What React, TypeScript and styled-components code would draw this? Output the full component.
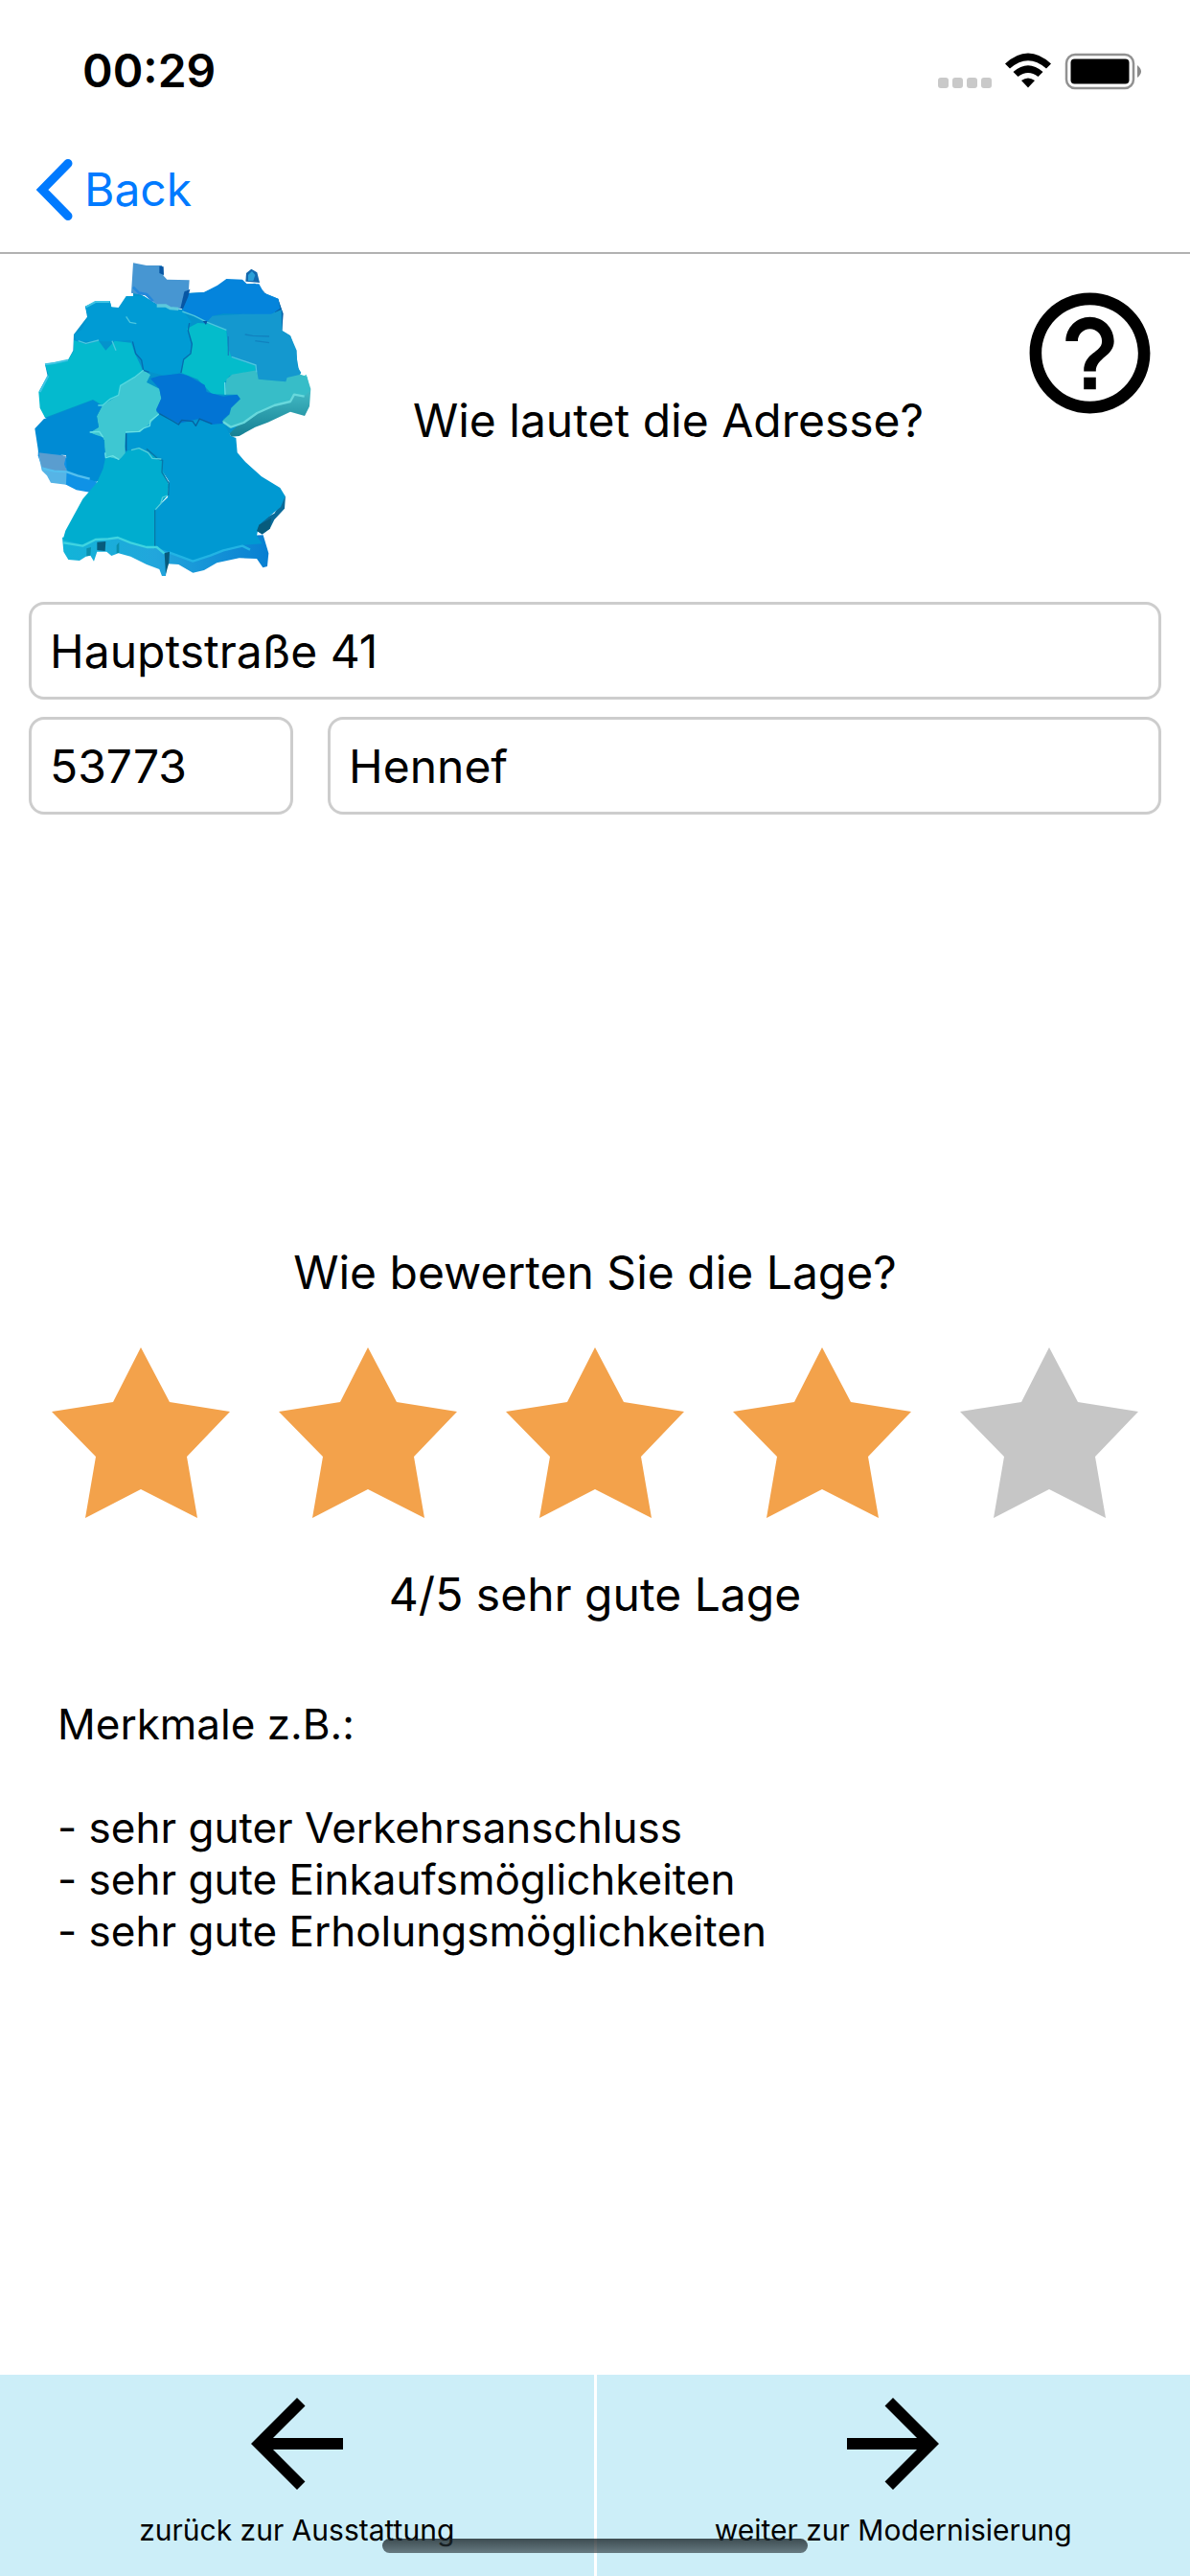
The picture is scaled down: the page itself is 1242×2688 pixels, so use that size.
import React, { useState } from 'react';
import styled, { createGlobalStyle } from 'styled-components';

const GlobalStyle = createGlobalStyle`
  *, *::before, *::after { box-sizing: border-box; }
  body {
    margin: 0;
    background: #fff;
    color: #000;
    font-family: Inter, "Liberation Sans", sans-serif;
  }
  button, input { font: inherit; color: inherit; }
`;

const Page = styled.div`
  display: flex;
  flex-direction: column;
  min-height: 100vh;
`;

const StatusBar = styled.header`
  display: flex;
  align-items: center;
  justify-content: space-between;
  height: 132px;
  padding: 16px 50px 0 86px;
`;

const Clock = styled.time`
  font-size: 48px;
  font-weight: 600;
  line-height: 60px;
`;

const NavBar = styled.nav`
  display: flex;
  align-items: center;
  height: 133px;
  padding: 0 36px;
  border-bottom: 2px solid #b2b2b2;
`;

const BackLink = styled.a`
  display: flex;
  align-items: center;
  gap: 10px;
  color: #007aff;
  font-size: 48px;
  line-height: 60px;
  text-decoration: none;
`;

const Content = styled.main`
  display: flex;
  flex-direction: column;
  flex: 1;
`;

const Intro = styled.section`
  display: flex;
  align-items: center;
  padding: 4px 29px 0 33px;
`;

const Question = styled.h1`
  flex: 1;
  margin: 0;
  font-size: 48px;
  font-weight: 400;
  line-height: 60px;
  text-align: center;
`;

const HelpButton = styled.button`
  align-self: flex-start;
  display: flex;
  margin-top: 24px;
  padding: 0;
  border: 0;
  background: none;
`;

const AddressForm = styled.form`
  display: grid;
  grid-template-columns: 276px 1fr;
  gap: 18px 36px;
  padding: 19px 30px 0;
`;

const Field = styled.input<{ $wide?: boolean }>`
  grid-column: ${(p) => (p.$wide ? '1 / -1' : 'auto')};
  width: 100%;
  height: 102px;
  padding: 0 19px;
  border: 3px solid #cdcdcd;
  border-radius: 16px;
  background: #fff;
  font-size: 48px;
  outline: none;
`;

const Rating = styled.section`
  display: flex;
  flex-direction: column;
  margin-top: 448px;
`;

const Caption = styled.p`
  margin: 0;
  font-size: 48px;
  line-height: 60px;
  text-align: center;
`;

const Stars = styled.div`
  display: grid;
  grid-template-columns: repeat(5, 1fr);
  padding: 48px 28px;
`;

const StarButton = styled.button<{ $on: boolean }>`
  display: flex;
  justify-content: center;
  padding: 0;
  border: 0;
  background: none;
  color: ${(p) => (p.$on ? '#f3a24b' : '#c6c6c6')};
`;

const Features = styled.section`
  padding: 78px 60px 0;
  font-size: 44px;
  line-height: 54px;
`;

const FeatureTitle = styled.p`
  margin: 0 0 54px;
`;

const FeatureList = styled.ul`
  margin: 0;
  padding: 0;
  list-style: none;
`;

const Footer = styled.footer`
  position: relative;
  display: grid;
  grid-template-columns: 1fr 1fr;
  gap: 3px;
  height: 210px;
`;

const StepButton = styled.button`
  display: flex;
  flex-direction: column;
  align-items: center;
  padding: 0;
  border: 0;
  background: #cceef8;
  font-size: 30px;
  line-height: 36px;
`;

const HomeIndicator = styled.div`
  position: absolute;
  bottom: 24px;
  left: 50%;
  width: 444px;
  height: 15px;
  border-radius: 8px;
  background: linear-gradient(rgba(20, 30, 34, 0.78), rgba(50, 62, 67, 0.66));
  transform: translateX(-50%);
`;

const StatusIcons = () => (
  <svg width="213" height="40" viewBox="0 0 213 40" aria-hidden="true">
    {[0, 15, 30, 45].map((x) => (
      <rect key={x} x={x} y="27" width="11" height="11" rx="3" fill="#c9c9c9" />
    ))}
    <path d="M70 12.500Q94-9.500 118 12.500L113 17.500Q94 1 75 17.500Z" />
    <path d="M78.500 21Q94 7.500 109.500 21L104.500 26Q94 18 83.500 26Z" />
    <path d="M87 30Q94 25 101 30L94 37.500Z" />
    <rect x="134" y="3" width="70" height="35" rx="9" fill="none" stroke="#919191" strokeWidth="2.500" />
    <rect x="138.500" y="7.500" width="61" height="26" rx="4" />
    <path d="M208 14q8 6.500 0 13Z" fill="#8a8a8a" />
  </svg>
);

const Chevron = () => (
  <svg width="42" height="66" viewBox="0 0 42 66" aria-hidden="true">
    <path d="M35 5.500L8 33L35 60.500" fill="none" stroke="#007aff" strokeWidth="9" strokeLinecap="round" strokeLinejoin="miter" />
  </svg>
);

const HelpIcon = () => (
  <svg width="151" height="151" viewBox="0 0 24 24" aria-hidden="true">
    <path d="M11 18h2v-2h-2v2zm1-16C6.480 2 2 6.480 2 12s4.480 10 10 10 10-4.480 10-10S17.520 2 12 2zm0 18c-4.410 0-8-3.590-8-8s3.590-8 8-8 8 3.590 8 8-3.590 8-8 8zm0-14c-2.210 0-4 1.790-4 4h2c0-1.100.9-2 2-2s2 .9 2 2c0 2-3 1.750-3 5h2c0-2.250 3-2.500 3-5 0-2.210-1.790-4-4-4z" />
  </svg>
);

const ArrowIcon = ({ forward }: { forward?: boolean }) => (
  <svg width="144" height="144" viewBox="0 0 24 24" aria-hidden="true">
    <path
      d={
        forward
          ? 'M12 4l-1.410 1.410L16.170 11H4v2h12.170l-5.580 5.590L12 20l8-8z'
          : 'M20 11H7.830l5.590-5.590L12 4l-8 8 8 8 1.410-1.410L7.830 13H20v-2z'
      }
    />
  </svg>
);

const StarIcon = () => (
  <svg width="188" height="180" viewBox="0 0 188 180" aria-hidden="true">
    <path d="M94 0L124 57L187 67L142 114L153 178L94 148L36 178L47 114L1 67L65 57Z" fill="currentColor" />
  </svg>
);

const GermanyMap = () => (
  <svg width="300" height="340" viewBox="40 30 900 1020" role="img" aria-label="Deutschlandkarte">
    <defs>
      <linearGradient id="south" x1="0" y1="0" x2="1" y2="0">
        <stop offset="0" stopColor="#12b4d8" />
        <stop offset="0.450" stopColor="#22a6dc" />
        <stop offset="1" stopColor="#087fd2" />
      </linearGradient>
      <linearGradient id="rim" x1="0" y1="0" x2="0" y2="1">
        <stop offset="0" stopColor="#53cfd6" />
        <stop offset="1" stopColor="#157f93" />
      </linearGradient>
    </defs>

    {/* raised edges below the surface */}
    <path fill="url(#south)" d="M136 905L140 950L155 975L190 978L210 965L224 962L235 980L245 950L275 950L290 963L312 955L350 965L400 990L440 1005L448 1026L460 1026L464 988L500 990L545 1016L580 1008L620 985L690 970L745 972L764 1000L778 996L782 955L765 898L700 900L400 900Z" />
    <path fill="#0a6a98" d="M835 775L832 815L800 850L786 878L762 896L745 885L750 855L800 830Z" />
    <path fill="url(#rim)" d="M636 540L665 590L690 588L740 560L780 545L850 512L895 525L910 495L914 440L900 395L840 430Z" />
    <path fill="#0f92e6" d="M62 600L60 650L75 690L148 740L180 757L222 764L245 735L200 690Z" />
    <path fill="#56b4e6" d="M62 650L72 696L88 712L100 734L148 740L150 690Z" />

    {/* ground under all the states */}
    <path fill="#0493cc" d="M358 130L358 150L312 186L290 186L285 166L245 166L208 182L214 215L172 270L170 320L154 350L82 364L90 400L64 450L82 530L240 600L240 730L450 700L640 600L700 540L880 400L866 320L850 274L824 258L826 205L812 158L768 140L740 110L620 120L580 138L532 140L510 192L440 180Z" />
    <path fill="#0762a8" d="M760 128L780 150L812 160L828 205L824 258L810 240L800 190Z" />
    <path fill="#1268ae" d="M710 104L712 78L728 65L746 76L754 108Z" />
    <path fill="#2a9fd8" d="M718 84L730 72L740 84L734 102L718 102Z" />

    {/* federal states */}
    <path fill="#4796d2" d="M358 46L400 54L448 54L453 86L464 98L534 100L532 130L518 138L512 190L470 186L432 176L395 148L352 140Z" />
    <path fill="#0484dc" d="M526 142L580 138L622 116L650 96L700 98L714 112L752 112L768 140L812 158L818 188L790 208L700 206L640 205L606 212L590 232L512 196Z" />
    <path fill="#009bd4" d="M208 182L245 166L285 166L290 184L312 186L336 150L392 150L432 176L474 192L512 194L540 230L530 258L540 300L536 330L515 348L505 390L460 400L412 388L388 380L384 350L360 320L350 288L280 292L180 290L174 270L198 254L216 214Z" />
    <path fill="#1498cf" d="M514 196L588 232L606 212L700 206L790 206L822 192L824 258L850 274L870 320L872 370L884 390L876 402L836 418L745 410L744 370L690 350L664 340L656 310L652 262L590 236Z" />
    <path fill="#04bccb" d="M526 252L560 234L598 236L650 256L654 306L666 342L742 368L740 385L660 400L645 420L646 458L604 456L560 410L508 390L516 350L536 330L544 300Z" />
    <path fill="#04bace" d="M172 288L210 300L250 290L272 320L300 290L352 296L362 326L388 382L360 404L318 430L312 460L262 492L232 474L82 530L66 500L62 450L92 395L82 362L154 350L172 320Z" />
    <path fill="#3ec7d2" d="M390 382L412 396L400 420L440 440L446 470L430 510L440 520L410 550L380 576L334 576L332 620L334 648L314 662L270 652L268 600L222 576L250 560L244 526L262 492L312 460L318 430L362 404Z" />
    <path fill="#0274d4" d="M412 408L440 400L505 392L530 400L582 428L588 450L640 464L684 458L694 472L664 500L658 520L640 535L642 548L605 552L560 535L500 548L466 530L436 515L430 505L446 470L440 440Z" />
    <path fill="#37bdc8" d="M650 410L668 395L745 382L750 410L836 418L840 405L882 395L902 402L912 445L896 462L860 456L850 480L800 492L740 520L700 550L660 562L636 542L660 520L665 500L694 472L684 458L646 458Z" />
    <path fill="#008bd4" d="M50 565L78 535L232 476L260 494L244 526L250 560L222 578L264 592L272 652L264 690L244 732L180 708L150 698L148 648L62 642Z" />
    <path fill="#5a9dcf" d="M62 640L148 650L142 676L150 698L102 695L72 684Z" />
    <path fill="#0099d2" d="M440 518L466 530L500 550L560 540L605 552L642 550L664 588L680 594L684 640L710 670L760 715L818 750L834 776L820 810L752 866L745 900L762 925L696 930L640 945L590 962L548 978L470 950L426 936L426 818L466 780L470 730L450 700L452 660L400 630L334 632L336 580L380 576L410 550Z" />
    <path fill="#00adcf" d="M272 652L314 664L340 634L380 626L448 662L452 700L470 740L466 774L428 818L428 936L390 935L310 904L250 908L205 930L138 912L146 884L200 785L244 734L264 690Z" />

    {/* lit borders and cracks between the states */}
    <g fill="none" strokeWidth="4" strokeLinejoin="round">
      <path stroke="#076caf" d="M356 292L366 330L384 350L390 382L408 388M534 234L530 258L542 300L538 330L516 348L508 390" />
      <path stroke="#0877a8" d="M426 940L426 820M468 774L470 736L448 702L450 664L436 660L400 628" />
      <path stroke="#0762a0" d="M336 634L336 580M440 518L480 540L500 552L510 538L544 542L554 556L566 534L605 550" />
      <path stroke="#68e0e4" d="M222 576L252 574L264 592M270 640L272 656L294 650L314 662M334 576L376 574L390 564L410 556L412 540L438 520M645 420L646 458" />
      <path stroke="#54d8df" d="M248 492L262 492L286 472L312 460L318 430L362 404L390 382" />
      <path stroke="#55ceda" d="M352 632L376 626L405 640L418 658L446 660M466 774L450 780L444 800L428 818" />
      <path stroke="#4cc6de" d="M512 198L550 212L590 232L650 256M666 340L742 366L744 388M336 214L348 232L368 236M292 290L304 320M186 290L210 298L250 288" />
      <path stroke="#1182bf" d="M656 276L656 336M708 270L732 274L784 276M740 290L784 296" />
      <path stroke="#3fd4e0" strokeWidth="7" d="M140 922L200 932L240 912L280 910L310 906L350 922L400 936L432 936L456 956" />
      <path stroke="#22b4e4" strokeWidth="7" d="M470 952L545 980L600 962L640 946L700 932L724 944" />
      <path stroke="#68d8dc" strokeWidth="7" d="M640 544L664 560L704 546L746 516L800 492L850 480L862 458L894 464" />
      <path stroke="#54bfee" strokeWidth="7" d="M76 690L110 698L150 700L184 712L222 722" />
      <path stroke="#5cc8dc" strokeWidth="10" d="M432 180L460 180L474 188L500 190" />
      <path stroke="#3fc4e4" strokeWidth="6" d="M210 184L240 168L284 168M82 364L110 360L154 350M66 450L92 400" />
      <path stroke="#2488dc" strokeWidth="8" d="M358 122L376 140L400 144L420 166" />
    </g>
    <path fill="#0756a4" d="M518 136L536 128L530 152L514 190L506 188ZM440 56L453 58L454 84L440 78ZM576 228L590 228L586 240Z" />
    <path fill="#075b7c" d="M745 885L752 866L790 845L786 878L762 894ZM456 955L472 950L470 985L460 1020ZM245 920L272 918L270 948L245 945Z" />
    <path fill="#0b8fac" d="M212 940L226 936L224 962L212 964ZM306 930L314 920L314 954L306 954Z" />
  </svg>
);

const RATINGS = ['einfache Lage', 'mittlere Lage', 'gute Lage', 'sehr gute Lage', 'beste Lage'];
const FEATURES = ['sehr guter Verkehrsanschluss', 'sehr gute Einkaufsmöglichkeiten', 'sehr gute Erholungsmöglichkeiten'];

export default function App() {
  const [rating, setRating] = useState(4);

  return (
    <Page>
      <GlobalStyle />
      <StatusBar>
        <Clock>00:29</Clock>
        <StatusIcons />
      </StatusBar>
      <NavBar>
        <BackLink href="#back">
          <Chevron />
          Back
        </BackLink>
      </NavBar>
      <Content>
        <Intro>
          <GermanyMap />
          <Question>Wie lautet die Adresse?</Question>
          <HelpButton type="button" aria-label="Hilfe">
            <HelpIcon />
          </HelpButton>
        </Intro>
        <AddressForm>
          <Field $wide aria-label="Straße und Hausnummer" defaultValue="Hauptstraße 41" />
          <Field aria-label="Postleitzahl" defaultValue="53773" />
          <Field aria-label="Ort" defaultValue="Hennef" />
        </AddressForm>
        <Rating>
          <Caption>Wie bewerten Sie die Lage?</Caption>
          <Stars>
            {RATINGS.map((name, i) => (
              <StarButton
                key={name}
                type="button"
                $on={i < rating}
                aria-label={name}
                aria-pressed={i + 1 === rating}
                onClick={() => setRating(i + 1)}
              >
                <StarIcon />
              </StarButton>
            ))}
          </Stars>
          <Caption>
            {`${rating}/5 ${RATINGS[rating - 1]}`}
          </Caption>
        </Rating>
        <Features>
          <FeatureTitle>Merkmale z.B.:</FeatureTitle>
          <FeatureList>
            {FEATURES.map((feature) => (
              <li key={feature}>{`- ${feature}`}</li>
            ))}
          </FeatureList>
        </Features>
      </Content>
      <Footer>
        <StepButton type="button">
          <ArrowIcon />
          zurück zur Ausstattung
        </StepButton>
        <StepButton type="button">
          <ArrowIcon forward />
          weiter zur Modernisierung
        </StepButton>
        <HomeIndicator />
      </Footer>
    </Page>
  );
}
